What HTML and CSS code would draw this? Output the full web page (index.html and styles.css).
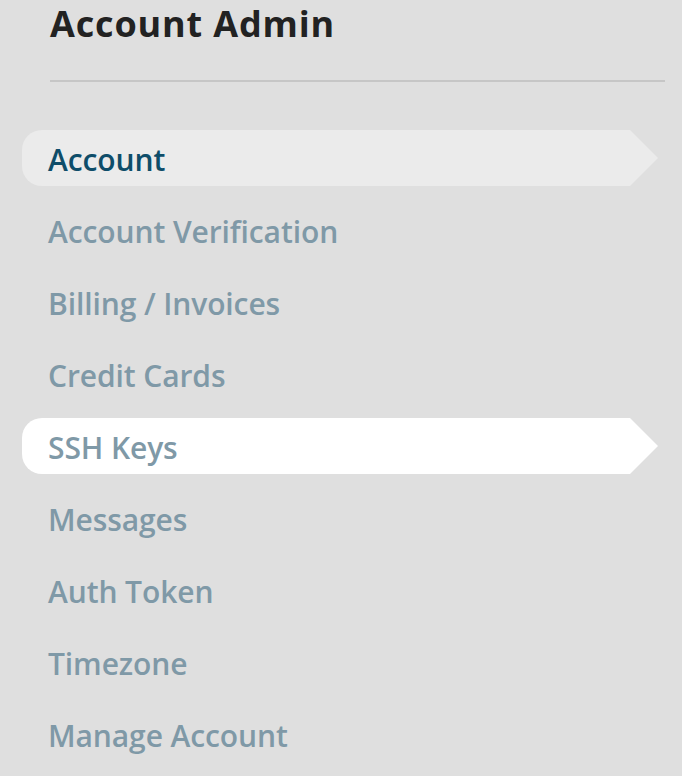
FILE: index.html
```html
<!DOCTYPE html>
<html>
<head>
<meta charset="utf-8">
<link rel="stylesheet" href="styles.css">
</head>
<body>
<div class="page">
  <div class="header">
    <h1 class="title">Account Admin</h1>
  </div>
  <ul class="nav">
    <li class="item active">Account</li>
    <li class="item">Account Verification</li>
    <li class="item">Billing / Invoices</li>
    <li class="item">Credit Cards</li>
    <li class="item hover">SSH Keys</li>
    <li class="item">Messages</li>
    <li class="item">Auth Token</li>
    <li class="item">Timezone</li>
    <li class="item">Manage Account</li>
  </ul>
</div>
</body>
</html>
```
FILE: styles.css
```css
html, body {
  margin: 0;
  padding: 0;
  background: #dfdfdf;
}
.page {
  font-family: "Open Sans", "Liberation Sans", sans-serif;
  padding-left: 22px;
}
.header {
  margin-left: 28px;
  width: 615px;
  border-bottom: 2px solid #c6c6c6;
  height: 80px;
}
.title {
  margin: 0;
  padding-top: 1px;
  font-size: 36px;
  line-height: 46px;
  font-weight: 700;
  color: #222;
  letter-spacing: 0.85px;
}
.nav {
  list-style: none;
  margin: 48px 0 0 0;
  padding: 0;
  display: flex;
  flex-direction: column;
  gap: 16px;
}
.item {
  position: relative;
  width: 582px;
  height: 56px;
  padding-left: 26px;
  padding-top: 2px;
  box-sizing: content-box;
  display: flex;
  align-items: center;
  font-size: 30px;
  font-weight: 600;
  letter-spacing: -0.1px;
  color: #7f99a7;
  border-radius: 20px 0 0 20px;
}
.item {
  height: 54px;
}
.item.active {
  background: #ebebeb;
  color: #0e4d69;
}
.item.hover {
  background: #ffffff;
}
.item.active::after,
.item.hover::after {
  content: "";
  position: absolute;
  left: 100%;
  top: 0;
  border-top: 28px solid transparent;
  border-bottom: 28px solid transparent;
  border-left: 28px solid #ebebeb;
}
.item.hover::after {
  border-left-color: #ffffff;
}
```
